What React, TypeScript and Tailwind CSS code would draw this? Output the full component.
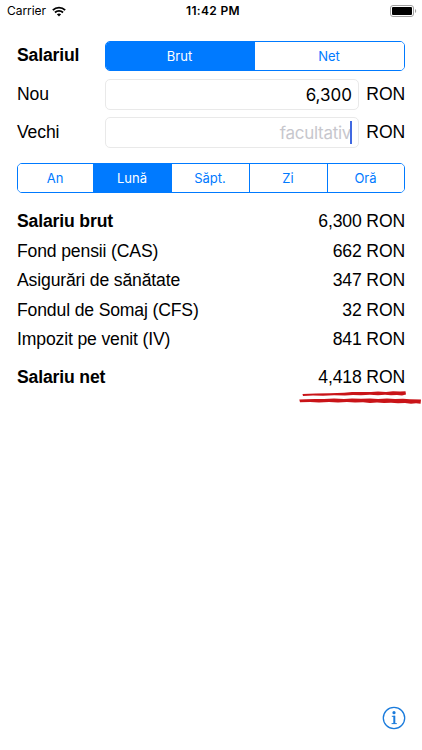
import React from 'react';

interface SegmentedProps {
  options: string[];
  selected: string;
  className: string;
}

interface ResultRow {
  label: string;
  value: string;
}

const deductions: ResultRow[] = [
  { label: 'Fond pensii (CAS)', value: '662' },
  { label: 'Asigurări de sănătate', value: '347' },
  { label: 'Fondul de Somaj (CFS)', value: '32' },
  { label: 'Impozit pe venit (IV)', value: '841' },
];

function StatusBar() {
  return (
    <header className="grid h-[22px] grid-cols-3 items-center pl-[7px] pr-[5px] font-['Inter',sans-serif] text-[12px] leading-[22px] tracking-normal">
      <div className="flex items-center gap-[6px]">
        <span className="tracking-[-0.05px]">Carrier</span>
        <svg width="14" height="11" viewBox="0 0 15 11" fill="none" stroke="#000" strokeWidth="2">
          <path d="M0.9 4.1C4.6 0.5 10.4 0.5 14.1 4.1" />
          <path d="M3.2 6.6C5.6 4.3 9.4 4.3 11.8 6.6" />
          <path d="M7.5 10.8L5.2 8.5C6.5 7.3 8.5 7.3 9.8 8.5Z" fill="#000" stroke="none" />
        </svg>
      </div>
      <span className="pl-[2px] text-center font-semibold tracking-[0.35px]">11:42 PM</span>
      <svg className="justify-self-end" width="27" height="12" viewBox="0 0 27 12">
        <rect x="0.5" y="0.5" width="23" height="11" rx="2.5" fill="#fff" stroke="#a0a0a0" />
        <rect x="2" y="2" width="20" height="8" rx="1" fill="#000" />
        <path d="M25 4C26.6 4.5 26.6 7.5 25 8Z" fill="#a0a0a0" />
      </svg>
    </header>
  );
}

function Segmented({ options, selected, className }: SegmentedProps) {
  return (
    <div
      className={`grid h-[30px] overflow-hidden rounded-[5px] border border-[#007aff] font-['Inter',sans-serif] text-[13px] tracking-normal ${className}`}
    >
      {options.map((option, i) => (
        <button
          key={option}
          className={`border-[#007aff] pr-[1px] ${i > 0 ? 'border-l' : ''} ${
            option === selected ? 'bg-[#007aff] text-white' : 'bg-white text-[#007aff]'
          }`}
        >
          {option}
        </button>
      ))}
    </div>
  );
}

function SalaryField({ label, value }: { label: string; value?: string }) {
  return (
    <div className="flex h-[31px] items-center">
      <span className="w-[88px] pb-[2px]">{label}</span>
      <div className="flex h-[31px] w-[254px] items-center justify-end rounded-[5px] border border-[#e9e9e9] pr-[6px] font-['Inter',sans-serif] text-[17px] tracking-normal">
        {value ? (
          <span>{value}</span>
        ) : (
          <>
            <span className="-mr-[1px] tracking-[-0.3px] text-[#c7c7cd]">facultativ</span>
            <span className="h-[23px] w-[2px] bg-[#4169e1]" />
          </>
        )}
      </div>
      <span className="ml-auto pb-[2px]">RON</span>
    </div>
  );
}

function Row({ label, value, bold }: ResultRow & { bold?: boolean }) {
  return (
    <div className="flex h-[29.5px] items-center justify-between">
      <span className={bold ? 'font-bold' : ''}>{label}</span>
      <span>{value} RON</span>
    </div>
  );
}

// Hand-drawn double underline below the net salary
function Scribble() {
  return (
    <svg className="absolute right-[-17px] top-[28px]" width="124" height="16" viewBox="298 390 124 16" fill="#c91418">
      <path d="M302.5 394L316 393.6 330 393.3 344 392.7 352 392.1 362 391.9 371 392 378 391.6 386 391.9 393 391.3 400 391.6 405.5 391.3 406 394.6 402 395.4 397 394.9 391 395.3 385 394.8 378 395.3 370 394.8 361 395.2 353 394.9 345 395.4 334 395.2 323 395.7 313 395.5 303 396Z" />
      <path d="M299.3 399.5L306 399.3 315 398.9 324 399.1 334 398.6 344 398.9 352 398.5 361 398.8 370 398.5 378 398.9 387 398.6 395 399 403 398.8 410 399.3 421 399.4 420.6 403.7 416 403.2 411 403.7 405 403 398 403.3 391 402.7 384 403.1 377 402.5 370 402.9 363 402.3 355 402.6 347 402.1 338 402.5 329 402 319 402.4 310 401.9 300 402.3Z" />
    </svg>
  );
}

export default function App() {
  return (
    <div className="flex h-[750px] w-[422px] flex-col overflow-hidden bg-white font-['Liberation_Sans',Arial,sans-serif] text-[17.6px] leading-[22px] tracking-[-0.15px] text-black">
      <StatusBar />
      <main className="flex flex-col pl-[17px] pr-[17px] pt-[19px]">
        <div className="flex items-center">
          <span className="w-[88px] pb-[2px] font-bold">Salariul</span>
          <Segmented options={['Brut', 'Net']} selected="Brut" className="w-[300px] grid-cols-[148px_150px]" />
        </div>
        <div className="mt-2 flex flex-col gap-[7px]">
          <SalaryField label="Nou" value="6,300" />
          <SalaryField label="Vechi" />
        </div>
        <Segmented
          options={['An', 'Lună', 'Săpt.', 'Zi', 'Oră']}
          selected="Lună"
          className="mt-[15px] w-full grid-cols-[75px_78px_78px_78px_77px]"
        />
        <section className="mt-[13.5px]">
          <Row label="Salariu brut" value="6,300" bold />
          {deductions.map((row) => (
            <Row key={row.label} label={row.label} value={row.value} />
          ))}
          <div className="relative mt-[8px]">
            <Row label="Salariu net" value="4,418" bold />
            <Scribble />
          </div>
        </section>
      </main>
      <footer className="mt-auto flex justify-end pb-[20px] pr-[16px]">
        <svg width="24" height="24" viewBox="0 0 24 24" fill="none" stroke="#1a7bdc">
          <circle cx="12" cy="12" r="10.7" strokeWidth="1.3" />
          <circle cx="12" cy="6.7" r="1.6" fill="#1a7bdc" stroke="none" />
          <path d="M12.3 9.8V17.6" strokeWidth="2" />
          <path d="M9.8 10.3H13M9.6 17.6H14.8" strokeWidth="1" />
        </svg>
      </footer>
    </div>
  );
}
